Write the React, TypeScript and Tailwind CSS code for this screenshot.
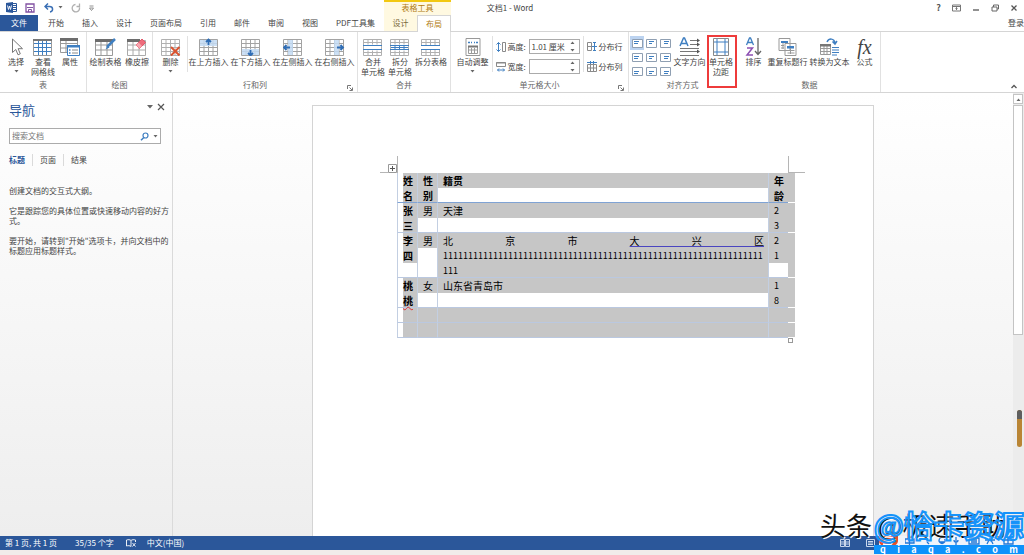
import React from "react";
import clsx from "clsx";

const BLUE = "#3f7fc1";
const GREY = "#8a8a8a";

/* ---------- icons ---------- */

function Icon({ w = 20, h = 18, children }: { w?: number; h?: number; children: React.ReactNode }) {
  return (
    <svg width={w} height={h} viewBox={`0 0 ${w} ${h}`} fill="none" className="shrink-0" aria-hidden="true">
      {children}
    </svg>
  );
}

const GridLines = ({ color = "#a3a3a3" }: { color?: string }) => (
  <path d="M.5 1.5h18v16H.5zM.5 5.5h18M.5 9.5h18M.5 13.5h18M5 1.5v16M9.5 1.5v16M14 1.5v16" stroke={color} />
);

const CursorIcon = () => (
  <Icon>
    <path d="M6.500 1v13.500l3.300-3 2.200 5.300 2.300-1-2.200-5.100h4.400z" fill="#fff" stroke="#777" />
  </Icon>
);

const GridViewIcon = () => (
  <Icon>
    <path d="M.5 1.500h18v16H.5z" fill="#fff" stroke="#999" />
    <path d="M1 5.500h17M1 9.500h17M1 13.500h17M5.500 3v14M9.500 3v14M13.500 3v14" stroke={BLUE} />
    <path d="M0 1h19v2H0z" fill="#777" />
  </Icon>
);

const PropertiesIcon = () => (
  <Icon>
    <path d="M.5 1.500h17v13H.5zM.5 5.500h17M.5 10h17M6 2v12" fill="#fff" stroke="#999" />
    <path d="M0 0h18v3H0z" fill="#6d6d6d" />
    <path d="M7.500 7.500h12v10h-12z" fill="#fff" stroke={BLUE} />
    <path d="M7 7h13v2.500H7z" fill={BLUE} />
    <path d="M9 12h1.500M9 15h1.500" stroke={BLUE} strokeWidth="1.500" />
    <path d="M12 12h6M12 15h6" stroke="#888" />
  </Icon>
);

const DrawTableIcon = () => (
  <Icon w={22}>
    <path d="M.5 2.500h17v15H.5zM.5 7h17M.5 12h17M6 3v14M12 3v14" fill="#fff" stroke="#999" />
    <path d="M0 1h18v3H0z" fill="#6d6d6d" />
    <path d="m20 1-8 8" stroke={BLUE} strokeWidth="2.500" />
    <path d="m12.500 7.500-2 4 4-2z" fill={BLUE} />
  </Icon>
);

const EraserIcon = () => (
  <Icon>
    <path d="M.5 2.500h18v15H.5zM.5 7h18M.5 12h18M6 3v14M12 3v14" fill="#fff" stroke="#aaa" />
    <path d="M0 1h13v3H0z" fill="#6d6d6d" />
    <path d="m9 7 6-6 3.500 3.500-6 6z" fill="#ee6d7c" stroke="#e0596b" />
    <path d="m9 7 3.500 3.500L15 8l-3.500-3.500z" fill="#f8a6b0" />
  </Icon>
);

const DeleteIcon = () => (
  <Icon>
    <GridLines color="#b0b0b0" />
    <path d="m10 9 8.500 8.500m0-8.500L10 17.500" stroke="#d9532f" strokeWidth="2" />
  </Icon>
);

function InsertIcon({ side }: { side: "up" | "down" | "left" | "right" }) {
  const band = { up: "M1 2h17v6H1z", down: "M1 11h17v6H1z", left: "M5 2h5v15H5z", right: "M9 2h5v15H9z" }[side];
  const arrow = {
    up: "M9.500 7V2M7 4l2.500-2.500L12 4",
    down: "M9.500 12v5M7 15l2.500 2.500L12 15",
    left: "M7 9.500H1M3.500 7 1 9.500 3.500 12",
    right: "M12 9.500h6M15.500 7 18 9.500 15.500 12",
  }[side];
  return (
    <Icon>
      <GridLines />
      <path d={band} fill="#c3dbf3" fillOpacity=".85" />
      <path d={arrow} stroke="#2f6db5" strokeWidth="1.800" />
    </Icon>
  );
}

const MergeIcon = ({ split = false }: { split?: boolean }) => (
  <Icon>
    <path
      d="M.5 1.500h18v16H.5zM.5 4.500h18M.5 14.500h18M5 1.500v5M9.500 1.500v5M14 1.500v5M5 12.500v5M9.500 12.500v5M14 12.500v5"
      stroke="#b0b0b0"
    />
    <path d="M0 7.500h19M0 11.500h19" stroke={BLUE} />
    {split && <path d="M1 9.500h17M5 8v3M9.500 8v3M14 8v3" stroke={BLUE} />}
  </Icon>
);

const SplitTableIcon = () => (
  <Icon>
    <path
      d="M.5 1.500h18v6H.5zM.5 4.500h18M5 1.500v6M9.500 1.500v6M14 1.500v6M.5 11.500h18v6H.5zM.5 14.500h18M5 11.500v6M9.500 11.500v6M14 11.500v6"
      stroke="#b0b0b0"
    />
    <path d="M0 7.500h19M0 11.500h19" stroke={BLUE} />
  </Icon>
);

const AutoFitIcon = () => (
  <Icon w={16}>
    <path d="M1 .5h14v17H1z" fill="#fff" stroke="#999" />
    <path d="M3 4.500h2M11 4.500h2M6 4.500h1M9 4.500h1" stroke={BLUE} strokeWidth="1.500" />
    <path d="M3.500 8.500h9v7h-9zM3.500 12h9M6.500 10v5M9.500 10v5" stroke="#999" />
    <path d="M3 7.500h10v2H3z" fill="#777" />
  </Icon>
);

const HeightIcon = () => (
  <Icon w={12} h={12}>
    <path d="M2.500 1.500v9M.5 3.500l2-2 2 2M.5 8.500l2 2 2-2" stroke={BLUE} />
    <path d="M6.500 1.500h3v9h-3z" stroke={GREY} />
  </Icon>
);

const WidthIcon = () => (
  <Icon w={12} h={12}>
    <path d="M.5 1.500h9v4h-9zM0 2h10" stroke={GREY} />
    <path d="M1.500 9h7M3 7.500 1.500 9 3 10.500M7 7.500 8.500 9 7 10.500" stroke={BLUE} />
  </Icon>
);

const DistributeIcon = ({ cols = false }: { cols?: boolean }) => (
  <Icon w={10} h={11}>
    {cols ? (
      <>
        <path d="M.5 3.500h9v7h-9zM.5 7h9M3.500 3v7M6.500 3v7" stroke={GREY} />
        <path d="M0 1.500h10M3.500 0v3M6.500 0v3" stroke={BLUE} />
      </>
    ) : (
      <>
        <path d="M.5 1.500h4v8h-4zM.5 5.500h4" stroke={GREY} />
        <path d="M5 5.500h5M7.500 1v9M6 1.500h3M6 9.500h3" stroke={BLUE} />
      </>
    )}
  </Icon>
);

const TextDirectionIcon = () => (
  <Icon w={22} h={20}>
    <path d="m1 9 3.500-8h1L9 9M2.500 6.500h5" stroke={BLUE} strokeWidth="1.500" />
    <path d="M11 3.500h9M11 7.500h9M1 11.500h19M1 14.500h19M1 18.500h19" stroke="#777" />
    <path d="m18 1.500 3 2-3 2zM18 5.500l3 2-3 2zM18 12.500l3 2-3 2z" fill="#555" />
  </Icon>
);

const MarginsIcon = () => (
  <Icon w={16}>
    <path d="M.5.500h15v17H.5z" fill="#fff" stroke="#888" />
    <path d="M4 1v16M12 1v16M1 4h14M1 14h14" stroke={BLUE} />
  </Icon>
);

const SortIcon = () => (
  <Icon w={18} h={20}>
    <path d="m1.500 8 3-7h1l3 7M3 5.500h4" stroke={BLUE} strokeWidth="1.300" />
    <path d="M2 11h5.500L2 18h6" stroke="#8d4fb3" strokeWidth="1.500" />
    <path d="M13 1v16M10 14l3 3.500 3-3.500" stroke="#666" strokeWidth="1.300" />
  </Icon>
);

const RepeatHeaderIcon = () => (
  <Icon>
    <path d="M1 .5h11v12H1zM7 5.500h11v12H7z" fill="#fff" stroke="#999" />
    <path d="M3 3h7v2H3zM9 8h7v2.500H9z" fill={BLUE} />
    <path d="M3 7.500h3M3 10h3M9.500 12.500h7M9.500 15h7M12.500 10v6M5 5v6" stroke="#999" />
  </Icon>
);

const ToTextIcon = () => (
  <Icon>
    <path d="M7 4c2-4 7-4 8 1M12.500 3.500 15 6l2-3" stroke={BLUE} strokeWidth="1.500" />
    <path d="M.5 7.500h10v9H.5zM.5 10.500h10M.5 13.500h10M4 8v8M7 8v8" stroke="#999" />
    <path d="M0 6h11v2.500H0z" fill="#777" />
    <path d="M12 9.500h7M12 12h7M12 14.500h7M12 17h5" stroke={BLUE} />
  </Icon>
);

function AlignIcon({ row, col }: { row: number; col: number }) {
  const x = 2 + col;
  const y = 2 + row;
  return (
    <Icon w={11} h={9}>
      <path d="M.5.500h10v8H.5z" fill="#fff" stroke="#8f9fb2" />
      <path d={`M${x} ${y + 0.5}h5M${x} ${y + 2.5}h${4 - (col % 2)}`} stroke={BLUE} />
    </Icon>
  );
}

const Launcher = () => (
  <button aria-label="更多设置" className="absolute right-1 bottom-px">
    <Icon w={6} h={6}>
      <path d="M.5 4V.5H4M2.500 2.500 5 5M5.500 2.500v3h-3" stroke="#777" />
    </Icon>
  </button>
);

const CaretDown = () => (
  <Icon w={5} h={3}>
    <path d="M.5 0h4l-2 2.500z" fill="#666" />
  </Icon>
);

/* ---------- ribbon ---------- */

type ToolProps = {
  icon: React.ReactNode;
  lines: string[];
  className: string;
  caret?: boolean;
};

function Tool({ icon, lines, className, caret }: ToolProps) {
  return (
    <button className={clsx("flex flex-col items-center whitespace-nowrap leading-[10px]", className)}>
      <span className="flex h-[21px] items-center">{icon}</span>
      {lines.map(line => (
        <span key={line}>{line}</span>
      ))}
      {caret && (
        <span className="flex h-2 items-center">
          <CaretDown />
        </span>
      )}
    </button>
  );
}

type GroupProps = { label: string; className: string; launcher?: boolean; children: React.ReactNode };

function Group({ label, className, launcher, children }: GroupProps) {
  return (
    <section className={clsx("relative flex shrink-0 flex-col pt-1", className)}>
      <div className="flex flex-1 items-start justify-center">{children}</div>
      <h2 className="h-[13px] text-center leading-[11px] text-[#666]">{label}</h2>
      {launcher && <Launcher />}
    </section>
  );
}

const Separator = () => <div className="h-9 w-px shrink-0 bg-[#e1e1e1]" />;

function SizeField({ id, label, value, icon }: { id: string; label: string; value: string; icon: React.ReactNode }) {
  return (
    <div className="flex h-[15px] items-center">
      {icon}
      <label htmlFor={id} className="w-[21px] whitespace-nowrap">
        {label}
      </label>
      <div className="flex h-[15px] w-[51px] items-center border border-[#ababab] bg-white pr-1">
        <input id={id} defaultValue={value} className="w-full min-w-0 pl-0.5 outline-none" />
        <Icon w={5} h={11}>
          <path d="M.5 3h4l-2-2.500zM.5 8h4l-2 2.500z" fill="#666" />
        </Icon>
      </div>
    </div>
  );
}

function Ribbon() {
  return (
    <div className="relative flex h-[62px] shrink-0 border-y border-[#d5d5d5] bg-white">
      <Group label="表" className="w-[87px] border-r border-[#e1e1e1]">
        <Tool icon={<CursorIcon />} lines={["选择"]} caret className="w-[27px]" />
        <Tool icon={<GridViewIcon />} lines={["查看", "网格线"]} className="w-[27px]" />
        <Tool icon={<PropertiesIcon />} lines={["属性"]} className="w-[27px]" />
      </Group>
      <Group label="绘图" className="w-[66px] border-r border-[#e1e1e1]">
        <Tool icon={<DrawTableIcon />} lines={["绘制表格"]} className="w-[35px]" />
        <Tool icon={<EraserIcon />} lines={["橡皮擦"]} className="w-[28px]" />
      </Group>
      <Group label="行和列" launcher className="w-[205px] border-r border-[#e1e1e1]">
        <Tool icon={<DeleteIcon />} lines={["删除"]} caret className="w-[32px]" />
        <Separator />
        <Tool icon={<InsertIcon side="up" />} lines={["在上方插入"]} className="w-[42px]" />
        <Tool icon={<InsertIcon side="down" />} lines={["在下方插入"]} className="w-[42px]" />
        <Tool icon={<InsertIcon side="left" />} lines={["在左侧插入"]} className="w-[42px]" />
        <Tool icon={<InsertIcon side="right" />} lines={["在右侧插入"]} className="w-[42px]" />
      </Group>
      <Group label="合并" className="w-[93px] border-r border-[#e1e1e1]">
        <Tool icon={<MergeIcon />} lines={["合并", "单元格"]} className="w-[27px]" />
        <Tool icon={<MergeIcon split />} lines={["拆分", "单元格"]} className="w-[27px]" />
        <Tool icon={<SplitTableIcon />} lines={["拆分表格"]} className="w-[35px]" />
      </Group>
      <Group label="单元格大小" launcher className="w-[178px] border-r border-[#e1e1e1]">
        <Tool icon={<AutoFitIcon />} lines={["自动调整"]} caret className="w-[38px]" />
        <Separator />
        <div className="flex flex-col gap-[5px] px-[3px] pt-[3px]">
          <SizeField id="height" label="高度:" value="1.01 厘米" icon={<HeightIcon />} />
          <SizeField id="width" label="宽度:" value="" icon={<WidthIcon />} />
        </div>
        <Separator />
        <div className="flex flex-col gap-[5px] px-[3px] pt-[3px]">
          <button className="flex h-[15px] items-center gap-0.5 whitespace-nowrap">
            <DistributeIcon />
            分布行
          </button>
          <button className="flex h-[15px] items-center gap-0.5 whitespace-nowrap">
            <DistributeIcon cols />
            分布列
          </button>
        </div>
      </Group>
      <Group label="对齐方式" className="w-[107px]">
        <div className="grid grid-cols-3">
          {[0, 1, 2].map(row =>
            [0, 1, 2].map(col => (
              <button
                key={`${row}${col}`}
                aria-label={`对齐 ${row + 1}-${col + 1}`}
                className={clsx(
                  "flex h-[14px] w-[14px] items-center justify-center",
                  row + col === 0 && "bg-[#bcd3f0]"
                )}
              >
                <AlignIcon row={row} col={col} />
              </button>
            ))
          )}
        </div>
        <Tool icon={<TextDirectionIcon />} lines={["文字方向"]} className="w-[35px]" />
        <div className="relative">
          <Tool icon={<MarginsIcon />} lines={["单元格", "边距"]} className="w-[28px]" />
          <div className="pointer-events-none absolute -top-px left-0 h-[53px] w-[30px] border-2 border-[#ee3b3b]" />
        </div>
      </Group>
      <Group label="数据" className="w-[145px] border-r border-[#e1e1e1] pl-[3px]">
        <Tool icon={<SortIcon />} lines={["排序"]} className="w-[26px]" />
        <Tool icon={<RepeatHeaderIcon />} lines={["重复标题行"]} className="w-[42px]" />
        <Tool icon={<ToTextIcon />} lines={["转换为文本"]} className="w-[42px]" />
        <Tool
          icon={<i className="font-['Liberation_Serif',serif] text-[20px] leading-5 text-[#444]">fx</i>}
          lines={["公式"]}
          className="w-[28px]"
        />
      </Group>
      <button aria-label="折叠功能区" className="absolute right-[7px] bottom-[3px]">
        <Icon w={6} h={5}>
          <path d="m.5 4 2.500-2.500L5.500 4" stroke="#555" strokeWidth="1.300" />
        </Icon>
      </button>
    </div>
  );
}

/* ---------- title bar and tabs ---------- */

const tabs = ["开始", "插入", "设计", "页面布局", "引用", "邮件", "审阅", "视图", "PDF工具集"];

function Header() {
  return (
    <header className="relative flex h-[31px] shrink-0 flex-col justify-between bg-white">
      <div className="flex h-[15px] items-center pl-1.5">
        <Icon w={11} h={11}>
          <path d="M6 1.500h4.500v8H6M7 3.500h3M7 5.500h3M7 7.500h3" stroke="#2b579a" />
          <path d="M0 1l7-1v11l-7-1z" fill="#2b579a" />
          <path d="m1.500 3.500 1 4 1-3.500 1 3.500 1-4" stroke="#fff" strokeWidth=".9" />
        </Icon>
        <button aria-label="保存" className="ml-2">
          <Icon w={10} h={10}>
            <path d="M1 1h8v8H1z" stroke="#8252a3" strokeWidth="1.300" />
            <path d="M2 4.500h6M3.500 9V6.500h3V9" stroke="#8252a3" />
          </Icon>
        </button>
        <button aria-label="撤消" className="ml-[9px] flex items-center gap-1">
          <Icon w={10} h={10}>
            <path d="M4 .5 1 3.500l3 3M1 3.500h4.500c4 0 4 5 .5 5.500" stroke="#3a6fb5" strokeWidth="1.500" />
          </Icon>
          <CaretDown />
        </button>
        <button aria-label="重复" className="ml-2">
          <Icon w={10} h={10}>
            <path d="M4.500 1.500a3.700 3.700 0 1 0 4 3M5.500 3.500H8.500V.5" stroke="#b0b0b0" strokeWidth="1.300" />
          </Icon>
        </button>
        <button aria-label="自定义快速访问工具栏" className="ml-2">
          <Icon w={5} h={6}>
            <path d="M.5 1h4M.5 3h4l-2 2.500z" stroke="#777" strokeWidth=".8" />
          </Icon>
        </button>
      </div>
      <h1 className="absolute inset-x-0 top-0 pr-1 text-center leading-[15px]">文档1 - Word</h1>
      <div className="absolute top-0 right-[6px] flex h-[15px] items-center gap-[11px] text-[#555]">
        <button aria-label="帮助" className="text-[9px] font-bold">
          ?
        </button>
        <button aria-label="功能区显示选项">
          <Icon w={9} h={8}>
            <path d="M.5 1h8v6h-8zM.5 2.500h8M4.500 6V3.500M3.500 4.500l1-1 1 1" stroke="#777" />
          </Icon>
        </button>
        <button aria-label="最小化">
          <Icon w={8} h={8}>
            <path d="M1 6h6" stroke="#555" strokeWidth="1.300" />
          </Icon>
        </button>
        <button aria-label="还原">
          <Icon w={8} h={8}>
            <path d="M1 3h5v4H1zM2.500 3V1h5v4H6" stroke="#666" />
          </Icon>
        </button>
        <button aria-label="关闭">
          <Icon w={8} h={8}>
            <path d="m1.500 1.500 5 5m0-5-5 5" stroke="#555" strokeWidth="1.300" />
          </Icon>
        </button>
      </div>
      <nav className="z-10 flex h-4 items-end leading-4">
        <button className="h-4 w-[38px] bg-[#2b579a] text-white">文件</button>
        <div className="flex pl-px">
          {tabs.map(tab => (
            <button key={tab} className="px-[9px]">
              {tab}
            </button>
          ))}
        </div>
        <div className="absolute left-[384px] w-[67px] border-t-[3px] border-[#f2c811] bg-[#fff9e1] text-[#b07b10]">
          <div className="h-[13px] text-center leading-[11px]">表格工具</div>
          <div className="flex h-4">
            <button className="w-[33px] text-[#7a6a3c]">设计</button>
            <button className="-mb-px h-[17px] flex-1 border border-b-0 border-[#d5d5d5] bg-white leading-[14px]">
              布局
            </button>
          </div>
        </div>
        <a href="#login" className="ml-auto">
          登录
        </a>
      </nav>
    </header>
  );
}

/* ---------- navigation pane ---------- */

function NavigationPane() {
  return (
    <aside className="w-[173px] shrink-0 border-r border-[#dadada] pt-2 pl-[9px]">
      <div className="flex items-start justify-between pr-[7px]">
        <h2 className="text-[13px] leading-[17px] text-[#2b579a]">导航</h2>
        <div className="flex items-center gap-1 pt-0.5">
          <button aria-label="任务窗格选项">
            <Icon w={6} h={4}>
              <path d="M0 0h6L3 3.500z" fill="#666" />
            </Icon>
          </button>
          <button aria-label="关闭窗格">
            <Icon w={8} h={8}>
              <path d="m1 1 6 6m0-6L1 7" stroke="#555" strokeWidth="1.200" />
            </Icon>
          </button>
        </div>
      </div>
      <div className="mt-[10px] mr-[11px] flex h-4 items-center border border-[#ababab] bg-white pr-0.5">
        <input
          aria-label="搜索文档"
          placeholder="搜索文档"
          className="min-w-0 flex-1 pl-0.5 outline-none placeholder:text-[#777]"
        />
        <button aria-label="搜索" className="flex items-center gap-1">
          <Icon w={9} h={9}>
            <circle cx="5.500" cy="3.500" r="2.500" stroke="#3f7fc1" strokeWidth="1.200" />
            <path d="M3.800 5.500 1 8.300" stroke="#3f7fc1" strokeWidth="1.500" />
          </Icon>
          <CaretDown />
        </button>
      </div>
      <div className="mt-[10px] flex h-3 items-center leading-3">
        <button className="pr-[7px] font-bold text-[#2b579a]">标题</button>
        <button className="border-x border-[#dadada] px-[7px]">页面</button>
        <button className="px-[7px]">结果</button>
      </div>
      <div className="mt-5 flex flex-col gap-[10px] leading-[10px]">
        <p>创建文档的交互式大纲。</p>
        <p>它是跟踪您的具体位置或快速移动内容的好方式。</p>
        <p>要开始，请转到"开始"选项卡，并向文档中的标题应用标题样式。</p>
      </div>
    </aside>
  );
}

/* ---------- document ---------- */

type Line = { text?: React.ReactNode; plain?: boolean; justify?: boolean };
type Row = { header?: boolean; cells: Line[][] };

const gap: Line = { plain: true };

const rows: Row[] = [
  {
    header: true,
    cells: [[{ text: "姓" }, { text: "名" }], [{ text: "性" }, { text: "别" }], [{ text: "籍贯" }, gap], [{ text: "年" }, { text: "龄" }]],
  },
  {
    cells: [[{ text: "张" }, { text: "三" }], [{ text: "男" }, gap], [{ text: "天津" }, gap], [{ text: "2" }, { text: "3" }]],
  },
  {
    cells: [
      [{ text: "李" }, { text: "四" }, gap],
      [{ text: "男" }, gap, gap],
      [
        {
          justify: true,
          text: (
            <>
              北 京 市{" "}
              <span className="underline decoration-[#4a45c0] decoration-1 underline-offset-1 [text-decoration-skip-ink:none]">
                大 兴 区
              </span>
            </>
          ),
        },
        { text: "1".repeat(64) },
        { text: "111" },
      ],
      [{ text: "2" }, { text: "1" }, gap],
    ],
  },
  {
    cells: [
      [
        { text: "桃" },
        { text: <span className="underline decoration-[#e03030] decoration-wavy decoration-1 underline-offset-1">桃</span> },
      ],
      [{ text: "女" }, gap],
      [{ text: "山东省青岛市" }, gap],
      [{ text: "1" }, { text: "8" }],
    ],
  },
  { cells: [[{}], [{}], [{}], [{}]] },
  { cells: [[{}], [{}], [{}], [{}]] },
];

function Cell({ lines, first, header }: { lines: Line[]; first: boolean; header?: boolean }) {
  return (
    <td
      className={clsx(
        "border-b border-l border-l-[#c3cfe2] p-0 align-top",
        header ? "border-b-[#7fa3d4]" : "border-b-[#bac8e0]",
        first && "pl-[5px]",
        (first || header) && "font-bold"
      )}
    >
      {lines.map((line, i) => (
        <div
          key={i}
          className={clsx(
            "leading-[15px] whitespace-nowrap",
            i === lines.length - 1 ? "h-[14px]" : "h-[15px]",
            !first && "pl-[5px]",
            line.plain ? "bg-white" : "bg-[#c6c6c6]",
            line.justify && "pr-1 [text-align-last:justify]",
            typeof line.text === "string" && /^\d/.test(line.text) && "text-[9px]"
          )}
        >
          {line.text}
        </div>
      ))}
    </td>
  );
}

function DocumentPage() {
  return (
    <div className="mx-auto mt-[12px] w-[562px] border border-b-0 border-[#d4d4d4] bg-white pt-[67px] pr-[78px] pl-[84px]">
      <div className="relative">
        <div className="absolute -top-[17px] left-0 h-[17px] w-px bg-[#b5b5b5]" />
        <div className="absolute -top-px -left-[17px] h-px w-[17px] bg-[#b5b5b5]" />
        <div className="absolute -top-[17px] right-1.5 h-[17px] w-px bg-[#b5b5b5]" />
        <div className="absolute -top-px -right-[10px] h-px w-4 bg-[#b5b5b5]" />
        <div className="absolute -top-[9px] -left-[9px] bg-white">
          <Icon w={9} h={9}>
            <path d="M.5.500h8v8h-8z" stroke="#999" />
            <path d="M4.500 2v5M2 4.500h5" stroke="#555" />
          </Icon>
        </div>
        <div className="absolute right-[2px] -bottom-[5px] z-10 size-[5px] border border-[#999] bg-white" />
        <table className="w-full table-fixed border-separate border-spacing-0 text-[10px] text-black">
          <colgroup>
            <col className="w-5" />
            <col className="w-5" />
            <col />
            <col className="w-5" />
            <col className="w-[7px]" />
          </colgroup>
          <tbody>
            {rows.map((row, i) => (
              <tr key={i}>
                {row.cells.map((lines, j) => (
                  <Cell key={j} lines={lines} first={j === 0} header={row.header} />
                ))}
                <td className="border-b border-white bg-[#c6c6c6] p-0" />
              </tr>
            ))}
          </tbody>
        </table>
      </div>
    </div>
  );
}

function ScrollBar() {
  return (
    <div className="relative flex w-[11px] shrink-0 flex-col bg-[#ececec] pt-px pr-px">
      <button aria-label="向上滚动" className="flex h-[10px] items-center justify-center border border-[#c4c4c4] bg-white">
        <Icon w={5} h={3}>
          <path d="M.5 3h4l-2-2.500z" fill="#666" />
        </Icon>
      </button>
      <div className="mt-px h-[52%] border border-[#c4c4c4] bg-white" />
      <div className="absolute top-[317px] right-0.5 h-[37px] w-[5px] overflow-hidden rounded-full bg-[#b98535]">
        <div className="h-[9px] bg-[#5f5f5f]" />
      </div>
    </div>
  );
}

/* ---------- status bar ---------- */

function StatusBar() {
  return (
    <footer className="relative shrink-0 bg-[#f1ecea] pb-[5px]">
      <div className="flex h-[14px] items-center bg-[#2b579a] pl-[5px] leading-[14px] text-white">
        <span>第 1 页, 共 1 页</span>
        <span className="ml-[18px]">35/35 个字</span>
        <span className="ml-3">
          <Icon w={10} h={8}>
            <path d="M5 1.500C4 .5 2 .5.500 1v6c1.500-.5 3.500-.5 4.500.5V1.500C6 .5 8 .5 9.500 1v2M6.500 4l3 3.500m0-3.500-3 3.500" stroke="#fff" strokeWidth=".9" />
          </Icon>
        </span>
        <span className="ml-[11px]">中文(中国)</span>
        <div className="ml-auto flex h-full items-center">
          <button aria-label="阅读视图" className="mr-4">
            <Icon w={10} h={8}>
              <path d="M.5.500h4v7h-4zM5.500.500h4v7h-4zM1 3h3M1 5h3M6 3h3M6 5h3" stroke="#c9d7ec" />
            </Icon>
          </button>
          <button aria-label="页面视图" className="mr-1">
            <Icon w={9} h={8}>
              <path d="M.5.500h8v7h-8zM2 2.500h5M2 4h5M2 5.500h5" stroke="#c9d7ec" />
            </Icon>
          </button>
          <div className="flex h-full w-[145px] items-start gap-[7px] bg-[#eef4fb] text-[#2177d8]">
            <Icon w={19} h={11}>
              <path d="M0 0h19v5c0 3-4 6-9 6S0 9 0 5z" fill="#e8502a" />
              <path d="M14 2C9 0 4 1 5 3.500s8 1 8 3.500-6 2-9 1" stroke="#fff" strokeWidth="1.500" />
            </Icon>
            <Icon w={112} h={10}>
              <path
                d="M0 3h9v4H0zM4.500 1v8M22 6l2 2M37 1.500a3 3 0 1 0 .1 0M35 6h4M51 1v4M49 4a2 2 0 0 0 4 0M51 6v3M64 2h10v6H64zM66 4h6M66 6h6M82 8l3-6 3 6M80 4h10M99 1h9v7h-9zM103 1v7M99 4h9"
                stroke="#2177d8"
                strokeWidth="1.300"
              />
            </Icon>
          </div>
        </div>
      </div>
    </footer>
  );
}

function Watermarks() {
  return (
    <div className="pointer-events-none absolute right-0 bottom-0 z-20 h-[48px] w-[204px] whitespace-nowrap">
      <div className="absolute top-[3px] left-0 text-[26px] leading-[30px] text-[#111] [text-shadow:1px_1px_0_#fff]">
        头条 @极速手助
      </div>
      <div className="absolute top-0 right-0 text-[30px] leading-[34px] font-bold text-[#ffffff44] [-webkit-text-stroke:2px_#1693fa]">
        @恰卡资源
      </div>
      <div className="absolute right-0 bottom-px flex h-[9px] w-[150px] items-center justify-between bg-[#0d92fb] px-1.5 text-[9px] leading-[9px] font-bold text-white">
        {"qiaqa.com".split("").map((letter, i) => (
          <span key={i}>{letter}</span>
        ))}
      </div>
    </div>
  );
}

export default function App() {
  return (
    <div className="relative flex h-screen flex-col overflow-hidden font-['Noto_Sans_CJK_SC',sans-serif] text-[8px] text-[#444]">
      <Header />
      <Ribbon />
      <main className="flex min-h-0 flex-1 bg-linear-to-b from-white to-[#eeeeee]">
        <NavigationPane />
        <div className="flex min-w-0 flex-1">
          <DocumentPage />
        </div>
        <ScrollBar />
      </main>
      <StatusBar />
      <Watermarks />
    </div>
  );
}
